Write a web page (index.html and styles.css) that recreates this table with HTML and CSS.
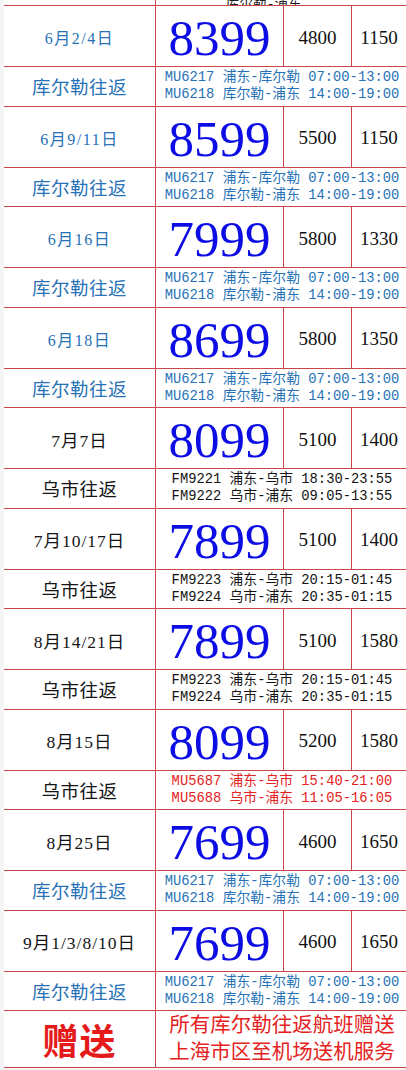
FILE: index.html
```html
<!DOCTYPE html>
<html lang="zh">
<head>
<meta charset="utf-8">
<title>航班价格表</title>
<link rel="stylesheet" href="styles.css">
</head>
<body>
<div class="sheet">
  <div class="strip">
    <div class="c c1"></div>
    <div class="c c2 stub"><span>库尔勒-浦东</span></div>
  </div>

  <div class="pair">
    <div class="c date blue">6月2/4日</div>
    <div class="c price">8399</div>
    <div class="c num">4800</div>
    <div class="c num">1150</div>
    <div class="c route blue">库尔勒往返</div>
    <div class="c flights blue"><span>MU6217 浦东-库尔勒 07:00-13:00</span><span>MU6218 库尔勒-浦东 14:00-19:00</span></div>
  </div>

  <div class="pair">
    <div class="c date blue">6月9/11日</div>
    <div class="c price">8599</div>
    <div class="c num">5500</div>
    <div class="c num">1150</div>
    <div class="c route blue">库尔勒往返</div>
    <div class="c flights blue"><span>MU6217 浦东-库尔勒 07:00-13:00</span><span>MU6218 库尔勒-浦东 14:00-19:00</span></div>
  </div>

  <div class="pair">
    <div class="c date blue">6月16日</div>
    <div class="c price">7999</div>
    <div class="c num">5800</div>
    <div class="c num">1330</div>
    <div class="c route blue">库尔勒往返</div>
    <div class="c flights blue"><span>MU6217 浦东-库尔勒 07:00-13:00</span><span>MU6218 库尔勒-浦东 14:00-19:00</span></div>
  </div>

  <div class="pair">
    <div class="c date blue">6月18日</div>
    <div class="c price">8699</div>
    <div class="c num">5800</div>
    <div class="c num">1350</div>
    <div class="c route blue">库尔勒往返</div>
    <div class="c flights blue"><span>MU6217 浦东-库尔勒 07:00-13:00</span><span>MU6218 库尔勒-浦东 14:00-19:00</span></div>
  </div>

  <div class="pair">
    <div class="c date black">7月7日</div>
    <div class="c price">8099</div>
    <div class="c num">5100</div>
    <div class="c num">1400</div>
    <div class="c route black">乌市往返</div>
    <div class="c flights black"><span>FM9221 浦东-乌市 18:30-23:55</span><span>FM9222 乌市-浦东 09:05-13:55</span></div>
  </div>

  <div class="pair">
    <div class="c date black">7月10/17日</div>
    <div class="c price">7899</div>
    <div class="c num">5100</div>
    <div class="c num">1400</div>
    <div class="c route black">乌市往返</div>
    <div class="c flights black"><span>FM9223 浦东-乌市 20:15-01:45</span><span>FM9224 乌市-浦东 20:35-01:15</span></div>
  </div>

  <div class="pair">
    <div class="c date black">8月14/21日</div>
    <div class="c price">7899</div>
    <div class="c num">5100</div>
    <div class="c num">1580</div>
    <div class="c route black">乌市往返</div>
    <div class="c flights black"><span>FM9223 浦东-乌市 20:15-01:45</span><span>FM9224 乌市-浦东 20:35-01:15</span></div>
  </div>

  <div class="pair">
    <div class="c date black">8月15日</div>
    <div class="c price">8099</div>
    <div class="c num">5200</div>
    <div class="c num">1580</div>
    <div class="c route black">乌市往返</div>
    <div class="c flights red"><span>MU5687 浦东-乌市 15:40-21:00</span><span>MU5688 乌市-浦东 11:05-16:05</span></div>
  </div>

  <div class="pair">
    <div class="c date black">8月25日</div>
    <div class="c price">7699</div>
    <div class="c num">4600</div>
    <div class="c num">1650</div>
    <div class="c route blue">库尔勒往返</div>
    <div class="c flights blue"><span>MU6217 浦东-库尔勒 07:00-13:00</span><span>MU6218 库尔勒-浦东 14:00-19:00</span></div>
  </div>

  <div class="pair">
    <div class="c date black">9月1/3/8/10日</div>
    <div class="c price">7699</div>
    <div class="c num">4600</div>
    <div class="c num">1650</div>
    <div class="c route blue">库尔勒往返</div>
    <div class="c flights blue"><span>MU6217 浦东-库尔勒 07:00-13:00</span><span>MU6218 库尔勒-浦东 14:00-19:00</span></div>
  </div>

  <div class="gift">
    <div class="c gift-title">赠送</div>
    <div class="c gift-text"><span>所有库尔勒往返航班赠送</span><span>上海市区至机场送机服务</span></div>
  </div>
</div>
</body>
</html>
```

FILE: styles.css
```css
html, body {
  margin: 0;
  padding: 0;
  background: #f4f4f4;
}

body {
  width: 406px;
  height: 1070px;
  overflow: hidden;
  font-family: "Liberation Serif", "Noto Sans CJK SC", serif;
}

.sheet {
  margin-left: 4px;
  width: 402px;
  background: #ffffff;
}

.strip,
.pair,
.gift {
  display: grid;
  grid-template-columns: 151px 128px 68px 1fr;
}

.strip {
  height: 5px;
  overflow: hidden;
}

.pair {
  grid-template-rows: 61px 39.5px;
}

.gift {
  grid-template-rows: 57px;
  border-bottom: 1px solid #c9474a;
  height: 57px;
}

.c {
  box-sizing: border-box;
  border-top: 1px solid #c9474a;
  display: flex;
  align-items: center;
  justify-content: center;
  white-space: nowrap;
}

.strip .c {
  border-top: none;
}

.c2 {
  grid-column: 2 / 5;
  border-left: 1px solid #c9474a;
}

.stub {
  align-items: flex-end;
  justify-content: flex-start;
  padding-left: 70px;
  font-family: "Liberation Mono", "Noto Sans CJK SC", monospace;
  font-size: 13.5px;
  line-height: 5px;
  color: #222;
  overflow: hidden;
}

.stub span {
  display: block;
  transform: translateY(2px);
}

.price,
.num {
  border-left: 1px solid #c9474a;
}

.date {
  font-size: 16px;
  letter-spacing: 1.5px;
  padding-top: 2px;
}

.date.black {
  font-size: 17.5px;
  letter-spacing: 1px;
}

.price {
  font-size: 51px;
  color: #0c0ce4;
  padding-top: 5px;
  line-height: 1;
}

.num {
  font-size: 19px;
  color: #111;
  padding-top: 3px;
}

.route {
  font-size: 18.5px;
  letter-spacing: 0.5px;
}

.flights {
  grid-column: 2 / 5;
  border-left: 1px solid #c9474a;
  flex-direction: column;
  font-family: "Liberation Mono", "Noto Sans CJK SC", monospace;
  font-size: 13.8px;
  line-height: 17px;
  padding-left: 2px;
}

.flights span {
  display: block;
}

.blue {
  color: #2772b6;
}

.black {
  color: #141414;
}

.red {
  color: #e52222;
}

.gift-title {
  font-size: 36px;
  color: #e51a1a;
  font-weight: bold;
  letter-spacing: 1px;
}

.gift-text {
  grid-column: 2 / 5;
  border-left: 1px solid #c9474a;
  flex-direction: column;
  font-size: 20.5px;
  line-height: 27px;
  color: #e52222;
  padding-left: 2px;
}

.gift-text span {
  display: block;
}
```
